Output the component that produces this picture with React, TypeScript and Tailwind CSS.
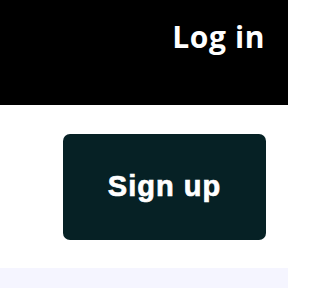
import React from 'react';

const App = () => {
  return (
    <div className="w-[288px] h-[288px] overflow-hidden bg-white flex flex-col">
      {/* Top bar */}
      <div className="h-[105px] bg-black flex justify-end items-start pr-[23px] pt-[22px]">
        <a
          href="#"
          className="text-white text-[30px] leading-[30px] font-bold tracking-[0.6px]"
          style={{ fontFamily: '"Open Sans", sans-serif' }}
        >
          Log in
        </a>
      </div>

      {/* Sign up */}
      <div className="flex justify-end pr-[22px] pt-[29px] pb-[28px]">
        <button
          className="w-[203px] h-[106px] rounded-[7px] bg-[#062125] text-white text-[29px] font-bold tracking-[1px] [-webkit-text-stroke:0.7px_#fff] flex items-center justify-center"
          style={{ fontFamily: '"Liberation Sans", Arial, sans-serif' }}
        >
          Sign up
        </button>
      </div>

      <div className="flex-1 bg-[#f5f5ff]" />
    </div>
  );
};

export default App;
